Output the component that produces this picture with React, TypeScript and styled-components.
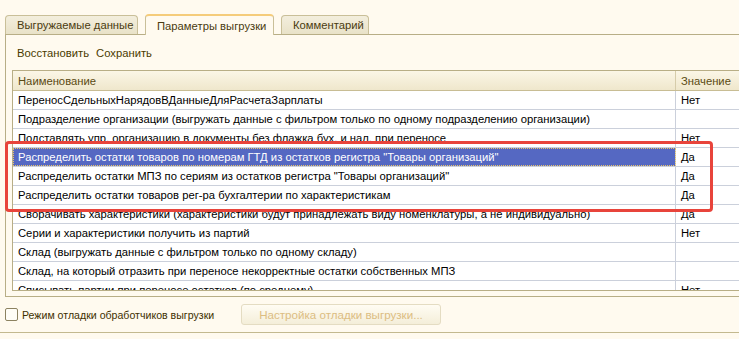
import React from "react";
import styled, { createGlobalStyle } from "styled-components";

const GlobalStyle = createGlobalStyle`
  html, body {
    margin: 0;
    padding: 0;
    background: #fffaef;
  }
`;

type Row = { name: string; value: string; selected?: boolean };

const rows: Row[] = [
  { name: "ПереносСдельныхНарядовВДанныеДляРасчетаЗарплаты", value: "Нет" },
  {
    name: "Подразделение организации (выгружать данные с фильтром только по одному подразделению организации)",
    value: "",
  },
  {
    name: "Подставлять упр. организацию в документы без флажка бух. и нал. при переносе",
    value: "Нет",
  },
  {
    name: "Распределить остатки товаров по номерам ГТД из остатков регистра \"Товары организаций\"",
    value: "Да",
    selected: true,
  },
  {
    name: "Распределить остатки МПЗ по сериям из остатков регистра \"Товары организаций\"",
    value: "Да",
  },
  {
    name: "Распределить остатки товаров рег-ра бухгалтерии по характеристикам",
    value: "Да",
  },
  {
    name: "Сворачивать характеристики (характеристики будут принадлежать виду номенклатуры, а не индивидуально)",
    value: "Да",
  },
  { name: "Серии и характеристики получить из партий", value: "Нет" },
  { name: "Склад (выгружать данные с фильтром только по одному складу)", value: "" },
  {
    name: "Склад, на который отразить при переносе некорректные остатки собственных МПЗ",
    value: "",
  },
  {
    name: "Списывать партии при переносе остатков (по среднему)",
    value: "Нет",
  },
];

const tabs = [
  { title: "Выгружаемые данные", width: 133 },
  { title: "Параметры выгрузки", width: 129, active: true },
  { title: "Комментарий", width: 88 },
];

const App: React.FC = () => {
  return (
    <Page>
      <GlobalStyle />
      <TabBar>
        {tabs.map((t) => (
          <Tab key={t.title} $active={!!t.active} $width={t.width}>
            {t.title}
          </Tab>
        ))}
      </TabBar>
      <Panel>
        <Toolbar>
          <ToolButton>Восстановить</ToolButton>
          <ToolButton>Сохранить</ToolButton>
        </Toolbar>
        <Table>
          <HeaderRow>
            <HeaderCell $first>Наименование</HeaderCell>
            <HeaderCell>Значение</HeaderCell>
          </HeaderRow>
          {rows.map((r) => (
            <TableRow key={r.name}>
              <NameCell $selected={!!r.selected}>{r.name}</NameCell>
              <ValueCell>{r.value}</ValueCell>
            </TableRow>
          ))}
        </Table>
      </Panel>
      <Footer>
        <CheckLabel>
          <CheckBox />
          Режим отладки обработчиков выгрузки
        </CheckLabel>
        <DisabledButton disabled>Настройка отладки выгрузки...</DisabledButton>
      </Footer>
      <BottomLine />
      <Highlight />
    </Page>
  );
};

const Page = styled.div`
  position: relative;
  width: 739px;
  height: 339px;
  overflow: hidden;
  background: #fffaef;
  font-family: "Liberation Sans", Arial, sans-serif;
  font-size: 11.25px;
  color: #000;
`;

const TabBar = styled.div`
  display: flex;
  align-items: flex-end;
  gap: 7px;
  height: 34px;
  padding-left: 5px;
  box-sizing: border-box;
`;

const Tab = styled.div<{ $active: boolean; $width: number }>`
  position: relative;
  z-index: ${({ $active }) => ($active ? 2 : 1)};
  box-sizing: border-box;
  width: ${({ $width }) => $width}px;
  height: ${({ $active }) => ($active ? 21 : 19)}px;
  margin-bottom: ${({ $active }) => ($active ? -1 : 0)}px;
  padding-left: 11px;
  display: flex;
  align-items: center;
  white-space: nowrap;
  border: 1px solid #c9bf98;
  border-bottom: none;
  border-radius: 4px 4px 0 0;
  color: #4a3b10;
  background: ${({ $active }) =>
    $active ? "#fffaef" : "linear-gradient(#f3eedd, #e9e2c8)"};
  ${({ $active }) => ($active ? "border-top: 2px solid #f5cc7a;" : "")}
`;

const Panel = styled.div`
  margin-left: 5px;
  height: 263px;
  box-sizing: border-box;
  border: 1px solid #b8ae86;
  border-right: none;
  padding: 0 0 0 6px;
  overflow: hidden;
`;

const Toolbar = styled.div`
  display: flex;
  gap: 7px;
  height: 35px;
  align-items: center;
  padding-left: 5px;
`;

const ToolButton = styled.span`
  color: #4a3a00;
`;

const Table = styled.div`
  height: 221px;
  box-sizing: border-box;
  border: 1px solid #b8ae86;
  border-right: none;
  overflow: hidden;
  background: #fff;
`;

const HeaderRow = styled.div`
  display: grid;
  grid-template-columns: 663px 1fr;
  height: 19px;
  background: linear-gradient(#fbf6e6, #efe7cc);
  border-bottom: 1px solid #c8bd94;
`;

const HeaderCell = styled.div<{ $first?: boolean }>`
  display: flex;
  align-items: center;
  padding-left: 5px;
  color: #5a4a12;
  ${({ $first }) => ($first ? "border-right: 1px solid #d6ccaa;" : "")}
`;

const TableRow = styled.div`
  display: grid;
  grid-template-columns: 663px 1fr;
  height: 19px;
  box-sizing: border-box;
  border-bottom: 1px solid #cbd0db;
`;

const NameCell = styled.div<{ $selected: boolean }>`
  display: flex;
  align-items: center;
  box-sizing: border-box;
  padding-left: 5px;
  white-space: nowrap;
  overflow: hidden;
  border-right: 1px solid #cbd0db;
  background: ${({ $selected }) => ($selected ? "#5568c2" : "transparent")};
  color: ${({ $selected }) => ($selected ? "#fff" : "#000")};
  ${({ $selected }) =>
    $selected ? "outline: 1px dotted #e9c46a; outline-offset: -1px;" : ""}
`;

const ValueCell = styled.div`
  display: flex;
  align-items: center;
  padding-left: 5px;
`;

const Footer = styled.div`
  display: flex;
  align-items: center;
  height: 35px;
  padding-left: 5px;
`;

const CheckLabel = styled.label`
  display: flex;
  align-items: center;
  gap: 4px;
  width: 236px;
  color: #3e3000;
  font-size: 10.6px;
`;

const CheckBox = styled.span`
  display: inline-block;
  width: 11px;
  height: 11px;
  border: 1px solid #8c8260;
  border-radius: 2px;
  background: #fffdf6;
`;

const DisabledButton = styled.button`
  width: 200px;
  height: 21px;
  border: 1px solid #e4dcc2;
  border-radius: 3px;
  background: linear-gradient(#fffcf3, #f4eed9);
  color: #dcbd82;
  font-family: "Liberation Sans", Arial, sans-serif;
  font-size: 11.6px;
  padding: 0;
`;

const BottomLine = styled.div`
  height: 1px;
  background: #c3b98f;
`;

const Highlight = styled.div`
  position: absolute;
  left: 5px;
  top: 141px;
  width: 708px;
  height: 71px;
  box-sizing: border-box;
  border: 3px solid #e8443b;
  border-radius: 4px;
  pointer-events: none;
`;

export default App;
